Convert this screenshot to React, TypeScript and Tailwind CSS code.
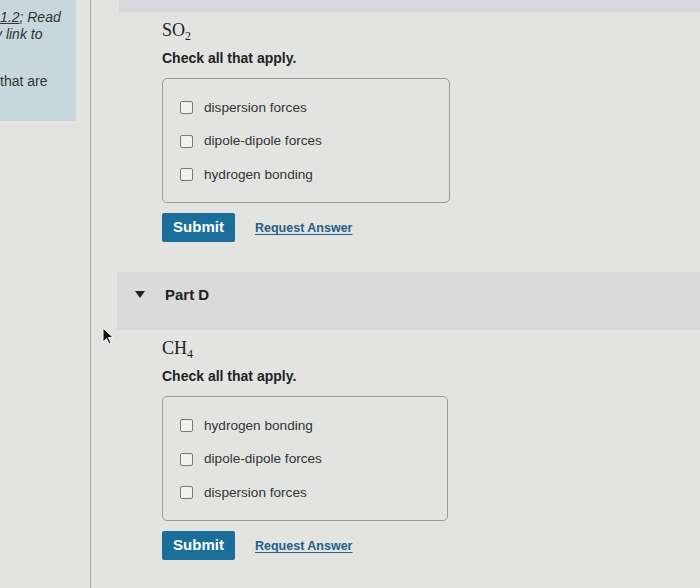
import type { ReactNode } from 'react';

const sans = { fontFamily: '"Liberation Sans", Arial, sans-serif' };

function Option({ label }: { label: string }) {
  return (
    <label className="flex h-[33.5px] items-center gap-[11px] text-[13.6px] text-[#333]">
      <span className="h-[13px] w-[13px] rounded-[2px] border-[1.5px] border-[#7a7a7a] bg-[#f1f1f0]" />
      <span>{label}</span>
    </label>
  );
}

function Question({ formula, options, boxWidth }: { formula: ReactNode; options: string[]; boxWidth: string }) {
  return (
    <div>
      <div className="h-[24px] text-[18px] leading-[24px] text-[#222]" style={{ fontFamily: '"Liberation Serif", "Times New Roman", serif' }}>
        {formula}
      </div>
      <p className="mt-[6px] text-[14px] font-bold leading-[20px] text-[#222]">Check all that apply.</p>
      <div className={`mt-[10px] h-[125px] rounded-[5px] border border-[#9a9b9c] pl-[17px] pt-[12px] ${boxWidth}`}>
        {options.map((o) => (
          <Option key={o} label={o} />
        ))}
      </div>
      <div className="mt-[10px] flex items-center gap-[20px]">
        <button type="button" className="h-[29px] w-[73px] rounded-[2px] bg-[#1a6e99] text-[15px] font-bold text-white">
          Submit
        </button>
        <a className="pt-[2px] text-[12.5px] font-bold text-[#245f86] underline underline-offset-2">Request Answer</a>
      </div>
    </div>
  );
}

function Sub({ children }: { children: ReactNode }) {
  return <span className="relative top-[4px] text-[12px] leading-none">{children}</span>;
}

export default function App() {
  return (
    <div className="relative flex h-[588px] w-[700px] overflow-hidden bg-[#e3e4e2]" style={sans}>
      {/* Left sidebar */}
      <div className="w-[91px] shrink-0 border-r border-[#a9abab]">
        <div className="h-[121px] w-[76px] overflow-hidden bg-[#c6d8db] pt-[9px] text-[14px] leading-[17px] text-[#333]">
          <p className="italic">
            <span className="underline">1.2</span>; Read
          </p>
          <p className="-ml-[5px] italic">y link to</p>
          <p className="mt-[30px]">that are</p>
        </div>
      </div>

      {/* Main */}
      <div className="flex-1">
        <div className="ml-[28px] h-[12px] bg-[#d7d8db]" />
        <div className="pl-[71px] pt-[6px]">
          <Question
            formula={
              <>
                SO<Sub>2</Sub>
              </>
            }
            options={['dispersion forces', 'dipole-dipole forces', 'hydrogen bonding']}
            boxWidth="w-[288px]"
          />
        </div>

        <div className="ml-[26px] mt-[30px] flex h-[58px] items-start bg-[#d9dad9] pt-[14px]">
          <svg width="10" height="7" viewBox="0 0 10 7" className="ml-[18px] mt-[5px]">
            <polygon points="0,0 10,0 5,7" fill="#222" />
          </svg>
          <span className="ml-[20px] text-[15px] font-bold leading-[18px] text-[#222]">Part D</span>
        </div>

        <div className="pl-[71px] pt-[6px]">
          <Question
            formula={
              <>
                CH<Sub>4</Sub>
              </>
            }
            options={['hydrogen bonding', 'dipole-dipole forces', 'dispersion forces']}
            boxWidth="w-[286px]"
          />
        </div>
      </div>

      {/* Mouse cursor */}
      <svg width="12" height="18" viewBox="0 0 12 18" className="absolute left-[102px] top-[327px]">
        <path d="M1 1 L1 15 L4.5 11.5 L7 17 L9 16 L6.5 10.5 L11 10.5 Z" fill="#111" stroke="#fff" strokeWidth="1" />
      </svg>
    </div>
  );
}
